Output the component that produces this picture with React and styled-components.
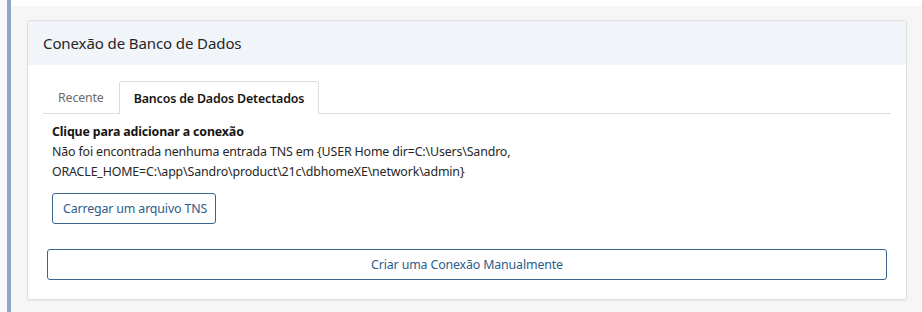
import styled, { createGlobalStyle } from "styled-components";

const GlobalStyle = createGlobalStyle`
  html, body {
    margin: 0;
    padding: 0;
    background: #ffffff;
    font-family: "Noto Sans", "Open Sans", sans-serif;
    color: #161513;
  }
`;

const Page = styled.div`
  width: 922px;
  height: 312px;
  display: flex;
  background: #ffffff;
`;

const SideStrip = styled.div`
  width: 7px;
  background: #f7f8fa;
`;

const SideBar = styled.div`
  width: 4px;
  background: #8ea8c3;
`;

const Main = styled.div`
  flex: 1;
  margin-top: 6px;
  background: #f6f6f6;
  padding: 14px 15px 0 16px;
`;

const Card = styled.div`
  width: 878px;
  height: 278px;
  background: #ffffff;
  border: 1px solid #dedede;
  border-radius: 3px;
  box-shadow: 0 1px 2px rgba(0, 0, 0, 0.06);
  display: flex;
  flex-direction: column;
`;

const CardHeader = styled.div`
  height: 44px;
  background: #f1f4f9;
  display: flex;
  align-items: center;
  padding: 0 15px;
  font-size: 15px;
  letter-spacing: -0.1px;
  color: #262626;
  border-radius: 3px 3px 0 0;
`;

const CardBody = styled.div`
  padding: 16px 19px 0 19px;
  display: flex;
  flex-direction: column;
`;

const Tabs = styled.div`
  display: flex;
  margin: 0 -4px;
  border-bottom: 1px solid #dcdcdc;
  height: 32px;
`;

const Tab = styled.div`
  box-sizing: border-box;
  padding: 0 14px;
  display: flex;
  align-items: center;
  font-size: 12.4px;
  letter-spacing: -0.15px;
  color: ${(p) => (p.$active ? "#161513" : "#6b6b6b")};
  font-weight: ${(p) => (p.$active ? 600 : 400)};
  background: #ffffff;
  border: 1px solid ${(p) => (p.$active ? "#dcdcdc" : "transparent")};
  border-bottom: none;
  border-radius: 3px 3px 0 0;
  margin-bottom: ${(p) => (p.$active ? "-1px" : "0")};
  height: ${(p) => (p.$active ? "33px" : "32px")};
`;

const Content = styled.div`
  padding: 8px 0 0 5px;
  font-size: 12.4px;
  letter-spacing: -0.15px;
  line-height: 20px;
  display: flex;
  flex-direction: column;
  align-items: flex-start;
`;

const Title = styled.div`
  font-weight: 700;
  color: #161513;
`;

const Message = styled.div`
  color: #262626;
`;

const Button = styled.button`
  font-family: inherit;
  font-size: 12.4px;
  letter-spacing: -0.15px;
  color: #2e5b8a;
  background: #ffffff;
  border: 1px solid #3d648d;
  border-radius: 3px;
  height: 31px;
  padding: 0 10px;
  white-space: nowrap;
  cursor: pointer;
`;

const SmallButton = styled(Button)`
  margin-top: 11px;
  width: 164px;
`;

const WideButton = styled(Button)`
  margin-top: 25px;
  width: 840px;
`;

const App = () => {
  return (
    <>
      <GlobalStyle />
      <Page>
        <SideStrip />
        <SideBar />
        <Main>
          <Card>
            <CardHeader>Conexão de Banco de Dados</CardHeader>
            <CardBody>
              <Tabs>
                <Tab>Recente</Tab>
                <Tab $active>Bancos de Dados Detectados</Tab>
              </Tabs>
              <Content>
                <Title>Clique para adicionar a conexão</Title>
                <Message>
                  Não foi encontrada nenhuma entrada TNS em {"{"}USER Home dir=C:\Users\Sandro,
                  <br />
                  ORACLE_HOME=C:\app\Sandro\product\21c\dbhomeXE\network\admin{"}"}
                </Message>
                <SmallButton>Carregar um arquivo TNS</SmallButton>
              </Content>
              <WideButton>Criar uma Conexão Manualmente</WideButton>
            </CardBody>
          </Card>
        </Main>
      </Page>
    </>
  );
};

export default App;
